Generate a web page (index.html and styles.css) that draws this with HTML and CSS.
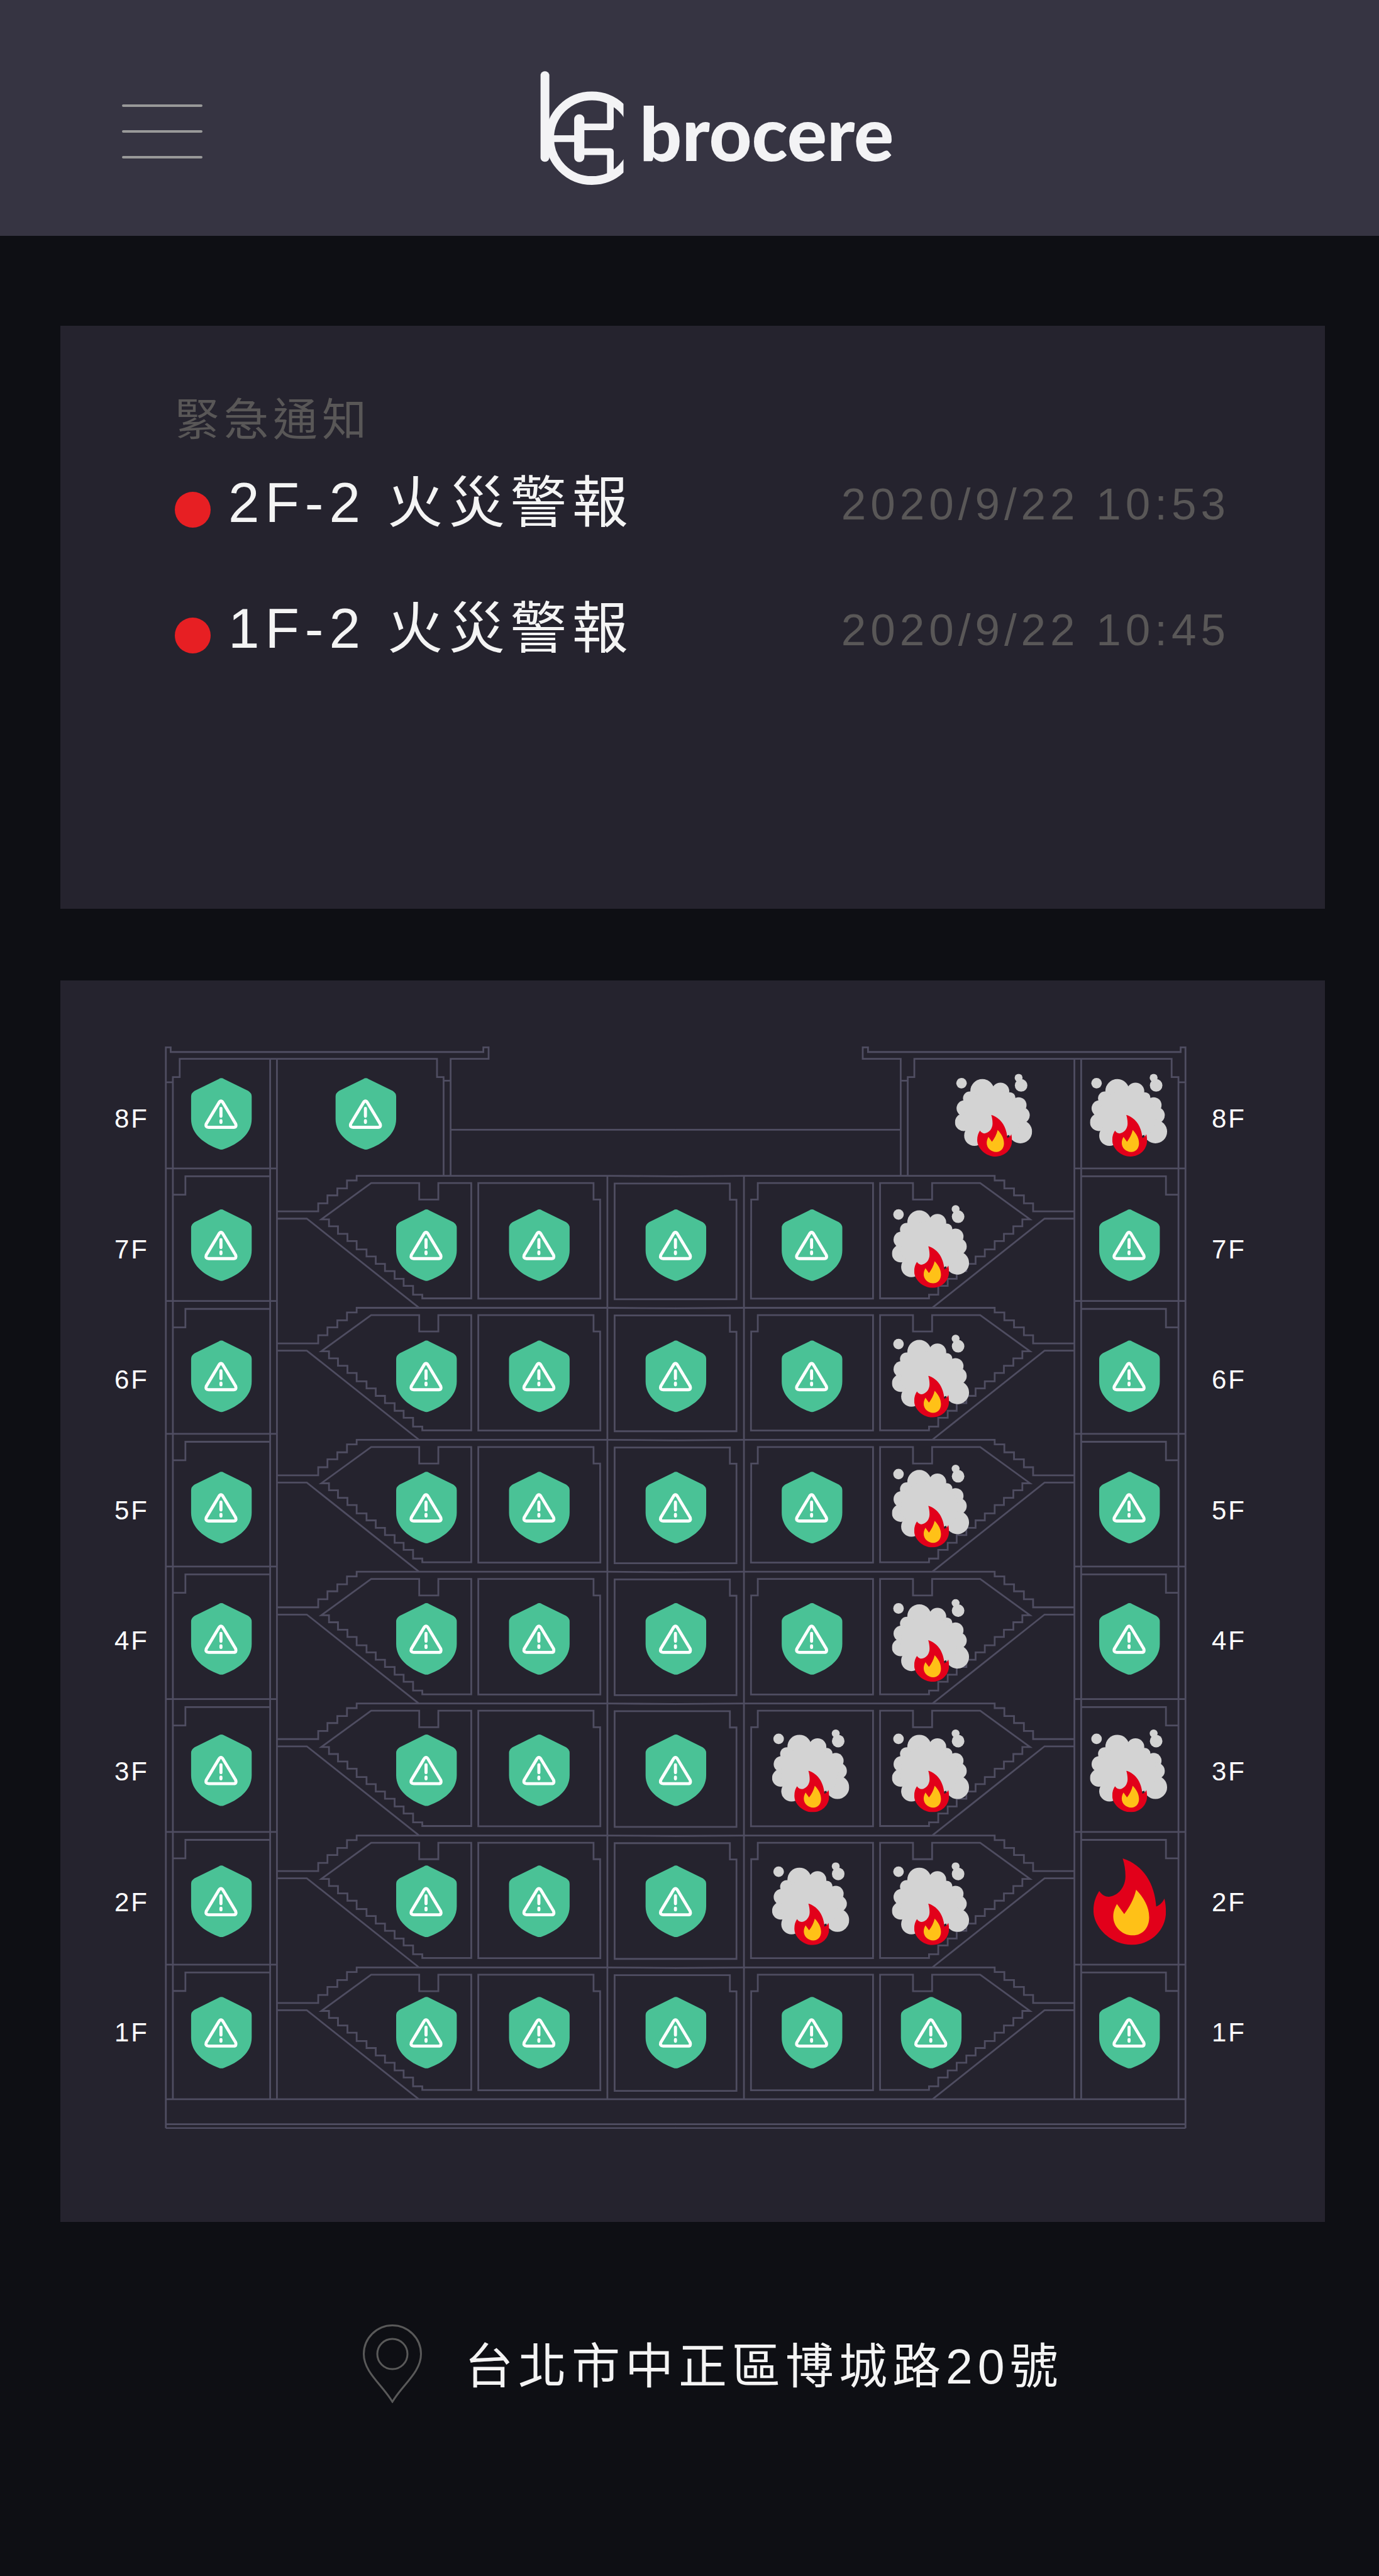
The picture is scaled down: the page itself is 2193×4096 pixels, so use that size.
FILE: index.html
```html
<!DOCTYPE html>
<html lang="zh-Hant">
<head>
<meta charset="utf-8">
<meta name="viewport" content="width=device-width, initial-scale=1">
<title>brocere</title>
<link rel="stylesheet" href="styles.css">
</head>
<body>
<header class="topbar">
  <button class="menu" type="button" aria-label="選單"><span></span><span></span><span></span></button>
  <a class="brand" href="#">
    <svg class="brand-mark" viewBox="60 65 571 780" aria-hidden="true">
      <clipPath id="mark-edge"><rect x="60" y="65" width="570" height="782"/></clipPath>
      <g clip-path="url(#mark-edge)">
        <rect x="61" y="66" width="61" height="621" rx="30"/>
        <rect x="292" y="361" width="70" height="328" rx="35"/>
        <rect x="140" y="505" width="170" height="46"/>
        <circle class="mark-line ring" cx="414" cy="525" r="290"/>
        <path class="mark-line" d="M330 447.500H540V262M330 617H540V788"/>
      </g>
    </svg>
    <span class="brand-name">brocere</span>
  </a>
</header>

<main>
  <section class="card alerts">
    <h1 class="alerts-title">緊急通知</h1>
    <ul class="alert-list">
      <li class="alert"><span class="dot"></span><span class="alert-text">2F-2 火災警報</span><time class="alert-time" datetime="2020-09-22T10:53">2020/9/22 10:53</time></li>
      <li class="alert"><span class="dot"></span><span class="alert-text">1F-2 火災警報</span><time class="alert-time" datetime="2020-09-22T10:45">2020/9/22 10:45</time></li>
    </ul>
  </section>

  <section class="card building">
    <ol class="floors">
      <li>8F</li><li>7F</li><li>6F</li><li>5F</li><li>4F</li><li>3F</li><li>2F</li><li>1F</li>
    </ol>
    <svg class="plan" viewBox="375 2383 2327 2465" role="img" aria-label="樓層狀態">
      <defs>
        <!-- one storey of the stairwell and rooms, left half -->
        <g id="storey">
          <path d="M630 81H724.500V62.500H745.500V44.500H768V28.500H790V10.500H812V0H1383L1539 1"/>
          <path d="M630 97.500H698.500L953.500 300"/>
          <path d="M1073 16.500H998V54H954.500V16.500H845L731.500 99H749V115H769.500V132H791V148.500H812V167.500H834.500V183.500H855.500V200.500H876.500V217H898.500V234.500H919V250.500H940.500V270.500H961.500V279H1073Z"/>
          <path d="M1089 16.500H1351.500V54H1366.500L1367 279.500H1089Z"/>
          <path d="M1383 0V300"/>
        </g>
        <g id="stack">
          <use href="#storey" y="2677.500"/><use href="#storey" y="2978"/><use href="#storey" y="3278.500"/><use href="#storey" y="3579"/><use href="#storey" y="3879"/><use href="#storey" y="4179.500"/><use href="#storey" y="4480"/>
        </g>
        <!-- side room of the outer column -->
        <path id="side" d="M377.500 0H630M615 18H422V60H394"/>
        <g id="half">
          <path d="M377.500 4846V2385H388.500V2395.500H1100.500V2385H1112.500V2411H1026V2677"/>
          <path d="M393.500 4780V2452.500H409V2411H995V2452.500H1010V2677"/>
          <path d="M377.500 2464.500H393.500M1010 2461H1026M615 2411V4780M630.500 2411V4780M1026 2572.500H1539"/>
          <path d="M377.500 4780H1539M377.500 4837H1539M377.500 4846H1539"/>
          <use href="#side" y="2660.500"/><use href="#side" y="2962.500"/><use href="#side" y="3265"/><use href="#side" y="3567"/><use href="#side" y="3869"/><use href="#side" y="4171.500"/><use href="#side" y="4473.500"/>
          <use href="#stack"/>
        </g>
        <g id="mid"><path d="M1399.500 17.500H1662V54.500H1677V281H1399.500Z"/></g>

        <g id="ok">
          <path class="shield" d="M-6 2Q0-2 6 2L61 29Q69 34 69 42V93C69 128 38 150 6 161.500Q0 164-6 161.500C-38 150-69 128-69 93V42Q-69 34-61 29Z"/>
          <path class="sign" d="M-6 56.500Q-1 48 4 56.500L32.500 104Q35 112 28 112H-29Q-37 112-34.500 104ZM-1 69V87M-1 97V101"/>
        </g>
        <symbol id="flame" viewBox="195 326 238 284">
          <path class="flame-outer" d="M291 326C360 348 396 410 401 484C414 480 422 470 428 458C432 475 433 490 433 502C433 560 385 610 320 610C255 610 195 555 195 497C195 470 203 450 214 433C222 446 234 452 246 452C275 450 300 420 300 385C300 365 297 345 291 326Z"/>
          <path class="flame-inner" d="M335 429C360 455 378 485 378 520C378 555 355 579 325 579C290 579 260 552 260 517C260 500 266 487 272 476L296 509C312 488 328 460 335 429Z"/>
        </symbol>
        <symbol id="smoke-art" viewBox="43 45 528 566">
          <g class="cloud">
            <circle cx="88" cy="109" r="36"/><circle cx="478" cy="72" r="27"/><circle cx="495" cy="124" r="43"/>
            <circle cx="230" cy="163" r="82"/><circle cx="354" cy="165" r="60"/><circle cx="418" cy="209" r="38"/>
            <circle cx="478" cy="259" r="54"/><circle cx="498" cy="328" r="56"/><circle cx="490" cy="440" r="80"/>
            <circle cx="144" cy="212" r="46"/><circle cx="109" cy="281" r="55"/><circle cx="103" cy="376" r="60"/><circle cx="176" cy="467" r="70"/>
            <path d="M144 212L230 163L354 150L418 209L478 259L498 328L470 440L320 500L176 467L103 376L109 281Z"/>
          </g>
          <use href="#flame" x="195" y="326" width="238" height="284"/>
        </symbol>
        <g id="smoke"><use href="#smoke-art" width="176" height="189"/></g>
      </defs>

      <g class="walls">
        <use href="#half"/>
        <use href="#half" transform="translate(3077 0) scale(-1 1)"/>
        <use href="#mid" y="2677.500"/><use href="#mid" y="2978"/><use href="#mid" y="3278.500"/><use href="#mid" y="3579"/><use href="#mid" y="3879"/><use href="#mid" y="4179.500"/><use href="#mid" y="4480"/>
      </g>

      <!-- 8F -->
      <use href="#ok" x="504" y="2455"/><use href="#ok" x="833" y="2455"/><use href="#smoke" x="2174.500" y="2445"/><use href="#smoke" x="2482" y="2445"/>
      <!-- 7F -->
      <use href="#ok" x="504" y="2754"/><use href="#ok" x="971" y="2754"/><use href="#ok" x="1228" y="2754"/><use href="#ok" x="1539" y="2754"/><use href="#ok" x="1849" y="2754"/><use href="#smoke" x="2031" y="2744"/><use href="#ok" x="2572" y="2754"/>
      <!-- 6F -->
      <use href="#ok" x="504" y="3052.500"/><use href="#ok" x="971" y="3052.500"/><use href="#ok" x="1228" y="3052.500"/><use href="#ok" x="1539" y="3052.500"/><use href="#ok" x="1849" y="3052.500"/><use href="#smoke" x="2031" y="3039"/><use href="#ok" x="2572" y="3052.500"/>
      <!-- 5F -->
      <use href="#ok" x="504" y="3351.500"/><use href="#ok" x="971" y="3351.500"/><use href="#ok" x="1228" y="3351.500"/><use href="#ok" x="1539" y="3351.500"/><use href="#ok" x="1849" y="3351.500"/><use href="#smoke" x="2031" y="3335"/><use href="#ok" x="2572" y="3351.500"/>
      <!-- 4F -->
      <use href="#ok" x="504" y="3650.500"/><use href="#ok" x="971" y="3650.500"/><use href="#ok" x="1228" y="3650.500"/><use href="#ok" x="1539" y="3650.500"/><use href="#ok" x="1849" y="3650.500"/><use href="#smoke" x="2031" y="3641"/><use href="#ok" x="2572" y="3650.500"/>
      <!-- 3F -->
      <use href="#ok" x="504" y="3949.500"/><use href="#ok" x="971" y="3949.500"/><use href="#ok" x="1228" y="3949.500"/><use href="#ok" x="1539" y="3949.500"/><use href="#smoke" x="1758" y="3938"/><use href="#smoke" x="2031" y="3938"/><use href="#smoke" x="2482" y="3938"/>
      <!-- 2F -->
      <use href="#ok" x="504" y="4248"/><use href="#ok" x="971" y="4248"/><use href="#ok" x="1228" y="4248"/><use href="#ok" x="1539" y="4248"/><use href="#smoke" x="1758" y="4240.500"/><use href="#smoke" x="2031" y="4240.500"/><use href="#flame" x="2490" y="4231.500" width="165" height="197"/>
      <!-- 1F -->
      <use href="#ok" x="504" y="4547"/><use href="#ok" x="971" y="4547"/><use href="#ok" x="1228" y="4547"/><use href="#ok" x="1539" y="4547"/><use href="#ok" x="1849" y="4547"/><use href="#ok" x="2120.500" y="4547"/><use href="#ok" x="2572" y="4547"/>
    </svg>
    <ol class="floors floors-right">
      <li>8F</li><li>7F</li><li>6F</li><li>5F</li><li>4F</li><li>3F</li><li>2F</li><li>1F</li>
    </ol>
  </section>
</main>

<footer class="place">
  <svg class="pin" viewBox="0 0 94 125" aria-hidden="true">
    <path d="M47 1.500C22 1.500 1.500 22 1.500 47C1.500 76 31 96 47 123C63 96 92.500 76 92.500 47C92.500 22 72 1.500 47 1.500Z"/>
    <circle cx="47" cy="47" r="24"/>
  </svg>
  <address class="address">台北市中正區博城路20號</address>
</footer>
</body>
</html>
```
FILE: styles.css
```css
* { box-sizing: border-box; }

body {
  margin: 0;
  background: #0e0f14;
  color: #f4f4f4;
  font-family: "Liberation Sans", "Noto Sans CJK TC", sans-serif;
  font-weight: 400;
}

.topbar {
  display: flex;
  align-items: flex-start;
  gap: 537px;
  min-height: 375px;
  padding: 113px 86px 81px 194px;
  background: #363442;
}

.menu {
  display: flex;
  flex-direction: column;
  gap: 37px;
  width: 128px;
  margin: 53px 0 0;
  padding: 0;
  border: 0;
  background: none;
}

.menu span {
  height: 4px;
  border-radius: 2px;
  background: #999;
}

.brand {
  display: flex;
  align-items: flex-start;
  gap: 25px;
  color: #f3f3f5;
  text-decoration: none;
}

.brand-mark {
  width: 133px;
  height: 181px;
  fill: currentColor;
}

.mark-line {
  fill: none;
  stroke: currentColor;
  stroke-width: 46;
  stroke-linejoin: round;
}

.ring { stroke-width: 60; }

.brand-name {
  margin-top: 43px;
  font: 900 118px/110px Lato, sans-serif;
}

main {
  display: grid;
  gap: 114px;
  padding: 143px 86px 0 96px;
}

.card { background: #25232e; }

.alerts { padding: 100px 151px 366px 182px; }

.alerts-title {
  margin: 0;
  color: #595757;
  font-size: 71px;
  font-weight: 400;
  line-height: 100px;
  letter-spacing: 7px;
}

.alert-list {
  display: grid;
  gap: 40px;
  margin: 1px 0 0;
  padding: 0;
  list-style: none;
}

.alert {
  display: flex;
  align-items: center;
  gap: 28px;
  line-height: 160px;
}

.dot {
  width: 57px;
  height: 57px;
  margin-top: 22px;
  border-radius: 50%;
  background: #e71f23;
}

.alert-text {
  font-size: 89px;
  letter-spacing: 9px;
}

.alert-time {
  margin: 3px 0 -3px auto;
  color: #595757;
  font-size: 71px;
  letter-spacing: 7px;
}

.building {
  display: grid;
  grid-template-columns: 80px 1fr 220px;
  padding: 105px 0 148px 86px;
}

.plan {
  display: block;
  width: 100%;
}

.floors {
  display: flex;
  flex-direction: column;
  justify-content: space-between;
  margin: 0;
  padding: 91px 0 129px;
  color: #fff;
  font-size: 42px;
  line-height: 48px;
  letter-spacing: 3px;
  list-style: none;
}

.floors-right { padding-left: 40px; }

.walls {
  fill: none;
  stroke: #4f4d61;
  stroke-width: 4;
}

.shield { fill: #4ac296; }

.sign {
  fill: none;
  stroke: #fff;
  stroke-width: 7;
  stroke-linecap: round;
  stroke-linejoin: round;
}

.cloud { fill: #d3d3d3; }
.flame-outer { fill: #e2001a; }
.flame-inner { fill: #ffc117; }

.place {
  display: flex;
  align-items: flex-start;
  gap: 68px;
  padding: 163px 86px 265px 577px;
}

.pin {
  width: 94px;
  height: 125px;
  fill: none;
  stroke: #595959;
  stroke-width: 3;
}

.address {
  font-size: 77px;
  font-style: normal;
  line-height: 135px;
  letter-spacing: 8px;
}
```
